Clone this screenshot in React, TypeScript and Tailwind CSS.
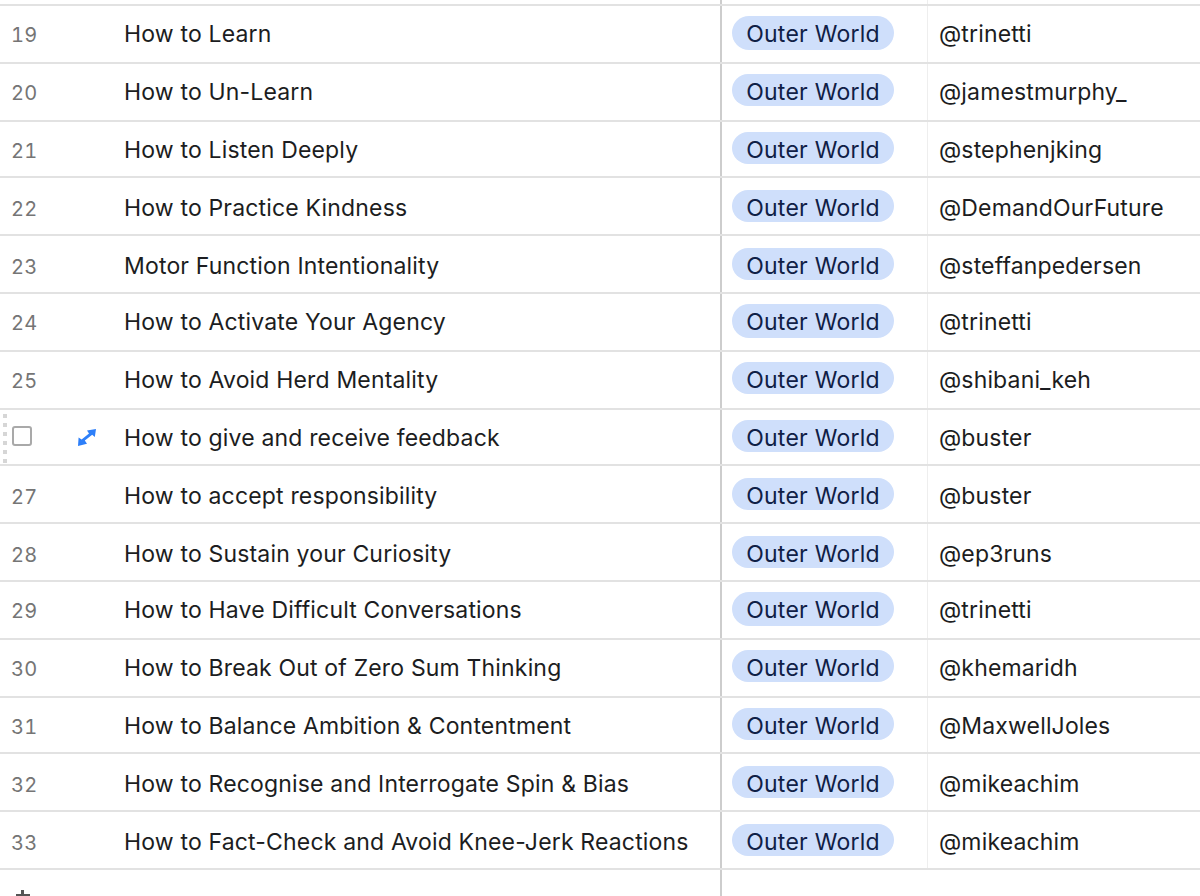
const rows: [string, string, string][] = [
  ["19", "How to Learn", "@trinetti"],
  ["20", "How to Un-Learn", "@jamestmurphy_"],
  ["21", "How to Listen Deeply", "@stephenjking"],
  ["22", "How to Practice Kindness", "@DemandOurFuture"],
  ["23", "Motor Function Intentionality", "@steffanpedersen"],
  ["24", "How to Activate Your Agency", "@trinetti"],
  ["25", "How to Avoid Herd Mentality", "@shibani_keh"],
  ["26", "How to give and receive feedback", "@buster"],
  ["27", "How to accept responsibility", "@buster"],
  ["28", "How to Sustain your Curiosity", "@ep3runs"],
  ["29", "How to Have Difficult Conversations", "@trinetti"],
  ["30", "How to Break Out of Zero Sum Thinking", "@khemaridh"],
  ["31", "How to Balance Ambition & Contentment", "@MaxwellJoles"],
  ["32", "How to Recognise and Interrogate Spin & Bias", "@mikeachim"],
  ["33", "How to Fact-Check and Avoid Knee-Jerk Reactions", "@mikeachim"],
];

function Expand() {
  return (
    <svg width="18" height="17" viewBox="0 0 18 17" fill="#2d7ff9">
      <path d="M18 0 L16.8 8 L14.2 5.8 L6.8 11.6 L9 14.8 L0 17 L0.6 8.4 L3.6 10.6 L11 4.6 L9 1.6 Z" />
    </svg>
  );
}

export default function App() {
  return (
    <div
      className="h-[896px] w-[1200px] overflow-hidden bg-white text-[23px] text-[#1c1d21]"
      style={{ fontFamily: "Inter, sans-serif" }}
    >
      <div className="flex h-[4px]">
        <div className="w-[720px]" />
        <div className="w-[208px] border-l-2 border-r border-l-[#cdcdcd] border-r-[#eeeeee]" />
      </div>
      {rows.map(([n, title, who], i) => {
        const active = n === "26";
        const phase = i % 5;
        const rowH = phase === 2 ? "h-[56px]" : "h-[58px]";
        const pad = phase < 3 ? "pt-[10px]" : "pt-[12px]";
        const pillH = phase === 0 ? "h-[34px]" : "h-[32px]";
        return (
          <div key={n} className={`flex border-t-2 border-[#e2e2e2] ${rowH}`}>
            <div className={`relative flex w-[720px] items-start ${pad}`}>
              {active ? (
                <>
                  <div className="absolute left-[3px] top-[4px] flex flex-col gap-[5px]">
                    {[0, 1, 2, 3, 4, 5].map((d) => (
                      <div key={d} className="h-[4px] w-[4px] bg-[#d6d6d6]" />
                    ))}
                  </div>
                  <div className="ml-[12px] mt-[6px] h-[20px] w-[20px] rounded-[3px] border-2 border-[#a9a9a9]" />
                  <div className="ml-[46px] mt-[9px] w-[46px]">
                    <Expand />
                  </div>
                </>
              ) : (
                <div className="w-[124px] pl-[11px] text-[20px] leading-[38px] tracking-[0.2px] text-[#757575] tabular-nums">
                  {n}
                </div>
              )}
              <div className="leading-[36px] tracking-[0.17px] whitespace-nowrap">{title}</div>
            </div>
            <div className={`w-[208px] border-l-2 border-r border-l-[#cdcdcd] border-r-[#eeeeee] pl-[10px] ${pad}`}>
              <div
                className={`w-[162px] rounded-full bg-[#cfdffb] text-center leading-[36px] tracking-[0.24px] text-[#102046] ${pillH}`}
              >
                Outer World
              </div>
            </div>
            <div className={`flex-1 pl-[11px] leading-[36px] tracking-[0.15px] whitespace-nowrap ${pad}`}>{who}</div>
          </div>
        );
      })}
      <div className="flex h-[30px] border-t-2 border-[#e2e2e2]">
        <div className="relative w-[720px]">
          <div className="absolute left-[16px] top-[24px] h-[3px] w-[14px] bg-[#555555]" />
          <div className="absolute left-[21px] top-[20px] h-[14px] w-[3px] bg-[#555555]" />
        </div>
        <div className="w-[2px] bg-[#cdcdcd]" />
      </div>
    </div>
  );
}
